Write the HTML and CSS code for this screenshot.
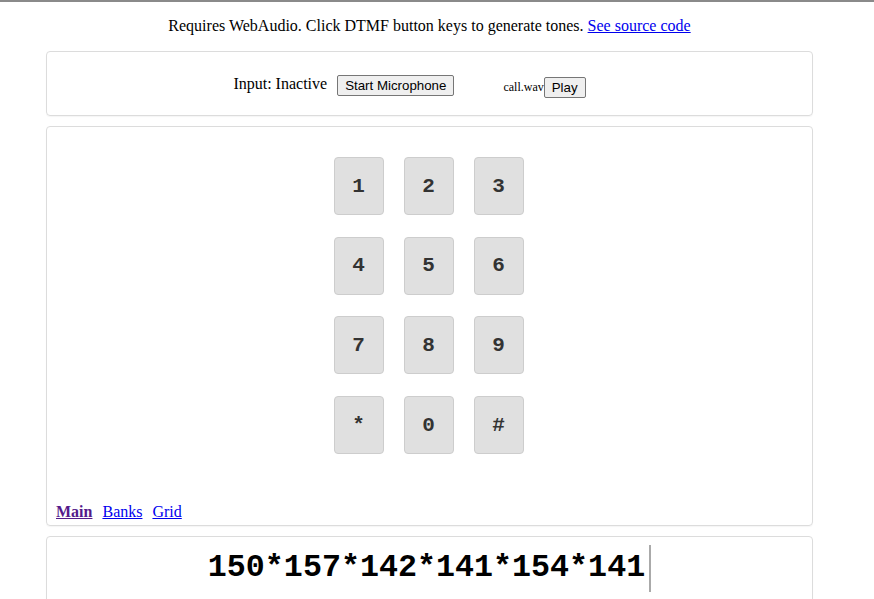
FILE: index.html
```html
<!DOCTYPE html>
<html>
<head>
<meta charset="utf-8">
<link rel="stylesheet" href="styles.css">
</head>
<body>
<div class="page">
  <p class="intro">Requires WebAudio. Click DTMF button keys to generate tones. <a href="#">See source code</a></p>
  <div class="box controls">
    <span class="status">Input: Inactive</span>
    <button class="btn">Start Microphone</button>
    <span class="file">call.wav</span><button class="btn">Play</button>
  </div>
  <div class="box pad">
    <div class="keys">
      <div class="key">1</div><div class="key">2</div><div class="key">3</div>
      <div class="key">4</div><div class="key">5</div><div class="key">6</div>
      <div class="key">7</div><div class="key">8</div><div class="key">9</div>
      <div class="key">*</div><div class="key">0</div><div class="key">#</div>
    </div>
    <nav class="tabs"><a href="#" class="tab active">Main</a><a href="#" class="tab">Banks</a><a href="#" class="tab">Grid</a></nav>
  </div>
  <div class="box display">
    <span class="digits">150*157*142*141*154*141</span><span class="caret"></span>
  </div>
</div>
</body>
</html>
```
FILE: styles.css
```css
html, body { margin: 0; padding: 0; }
body {
  font-family: "Liberation Serif", "Times New Roman", serif;
  font-size: 16px;
  color: #000;
  background: #fff;
  border-top: 2px solid #8a8a8a;
  overflow: hidden;
  height: 597px;
}
.page {
  width: 767px;
  margin-left: 46px;
}
.intro {
  margin: 14px 0 0;
  height: 20px;
  line-height: 20px;
  text-align: center;
}
.intro a { color: #0000ee; }
.box {
  border: 1px solid #dcdcdc;
  border-radius: 4px;
  box-sizing: border-box;
  box-shadow: 0 1px 1px rgba(0,0,0,0.04);
}
.controls {
  margin-top: 15px;
  height: 65px;
  display: flex;
  justify-content: center;
  align-items: center;
  padding-right: 40px;
  padding-top: 4px;
}
.status { margin-right: 10px; position: relative; top: -2px; }
.btn {
  font-family: "Liberation Sans", Arial, sans-serif;
  font-size: 13.3px;
  padding: 1px 7px;
  height: 21px;
  border: 1px solid #767676;
  border-radius: 2px;
  background: #efefef;
  color: #000;
}
.file {
  font-size: 12px;
  margin-left: 49px;
  position: relative;
  top: 2px;
}
.file + .btn { margin-top: 3px; }
.pad {
  margin-top: 10px;
  height: 400px;
  padding-top: 30px;
  display: flex;
  flex-direction: column;
}
.keys {
  align-self: center;
  display: grid;
  grid-template-columns: repeat(3, 50px);
  grid-auto-rows: 58px;
  column-gap: 20px;
  row-gap: 21.7px;
  margin-left: -2px;
}
.key {
  background: #e0e0e0;
  border: 1px solid #cdcdcd;
  border-radius: 4px;
  display: flex;
  align-items: center;
  justify-content: center;
  font-family: "Liberation Mono", "Courier New", monospace;
  font-weight: bold;
  font-size: 21px;
  color: #333;
}
.tabs {
  margin-top: auto;
  padding: 0 0 3px 9px;
  display: flex;
  gap: 10px;
  line-height: 20px;
}
.tab { color: #0000ee; }
.tab.active { color: #551a8b; font-weight: bold; }
.display {
  margin-top: 10px;
  height: 80px;
  display: flex;
  justify-content: center;
  padding-top: 8px;
  align-items: flex-start;
}
.digits {
  font-family: "Liberation Mono", "Courier New", monospace;
  font-weight: bold;
  font-size: 31.7px;
  line-height: 47px;
}
.caret {
  display: inline-block;
  width: 2px;
  height: 47px;
  background: #aaa;
  margin-left: 4px;
}
```
